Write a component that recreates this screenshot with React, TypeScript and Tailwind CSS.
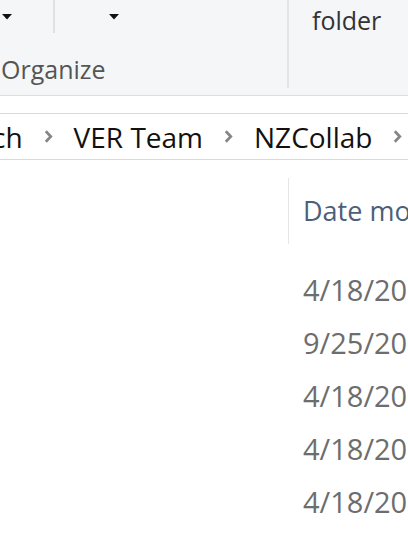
import React from 'react';

function Caret() {
  return (
    <svg width="10" height="6" viewBox="0 0 10 6">
      <path d="M0 0 H10 L5 5.5 Z" fill="#111" />
    </svg>
  );
}

function Chevron() {
  return (
    <svg width="9" height="13" viewBox="0 0 9 13" className="shrink-0">
      <path d="M1.8 1.3 L6.8 6.5 L1.8 11.7" fill="none" stroke="#858585" strokeWidth="2.7" />
    </svg>
  );
}

const dates = ['4/18/2019 3:12 PM', '9/25/2019 10:41 AM', '4/18/2019 3:12 PM', '4/18/2019 3:12 PM', '4/18/2019 3:12 PM'];

export default function App() {
  return (
    <div className="w-[408px] h-[544px] overflow-hidden bg-white" style={{ fontFamily: '"Open Sans", "Noto Sans", sans-serif' }}>
      {/* ribbon */}
      <div className="h-[96px] bg-[#f5f6f7] border-b border-[#dcdddf] flex">
        <div className="w-[289px] shrink-0 border-r-2 border-[#e3e4e6] mb-[7px] flex flex-col">
          <div className="h-[33px] flex">
            <div className="w-[55px] border-r-2 border-[#e0e1e3] flex items-start pt-[14px] pl-[2px]">
              <Caret />
            </div>
            <div className="flex-1 flex items-start pt-[14px] pl-[54px]">
              <Caret />
            </div>
          </div>
          <div className="pl-[1px] pt-[20px] text-[25px] leading-[32px] text-[#555]">Organize</div>
        </div>
        <div className="pl-[23px] pt-[2px] text-[25px] leading-[36px] text-[#333]">folder</div>
      </div>

      {/* breadcrumb */}
      <div className="mt-[17px] h-[47px] border-y border-[#d9d9d9] flex items-center gap-[21px] -ml-[8px] text-[28px] leading-[38px] text-[#111] whitespace-nowrap">
        <span>ch</span>
        <Chevron />
        <span>VER Team</span>
        <Chevron />
        <span>NZCollab</span>
        <Chevron />
      </div>

      {/* list */}
      <div className="pl-[288px] whitespace-nowrap">
        <div className="mt-[18px] h-[66px] border-l border-[#e6e6e6] pl-[14px] flex items-center text-[27px] text-[#4c607a]">
          Date modified
        </div>
        <div className="mt-[19px] pl-[15px] flex flex-col">
          {dates.map((d, i) => (
            <div key={i} className="h-[53px] flex items-center text-[29px] text-[#6d6d6d]">
              {d}
            </div>
          ))}
        </div>
      </div>
    </div>
  );
}
